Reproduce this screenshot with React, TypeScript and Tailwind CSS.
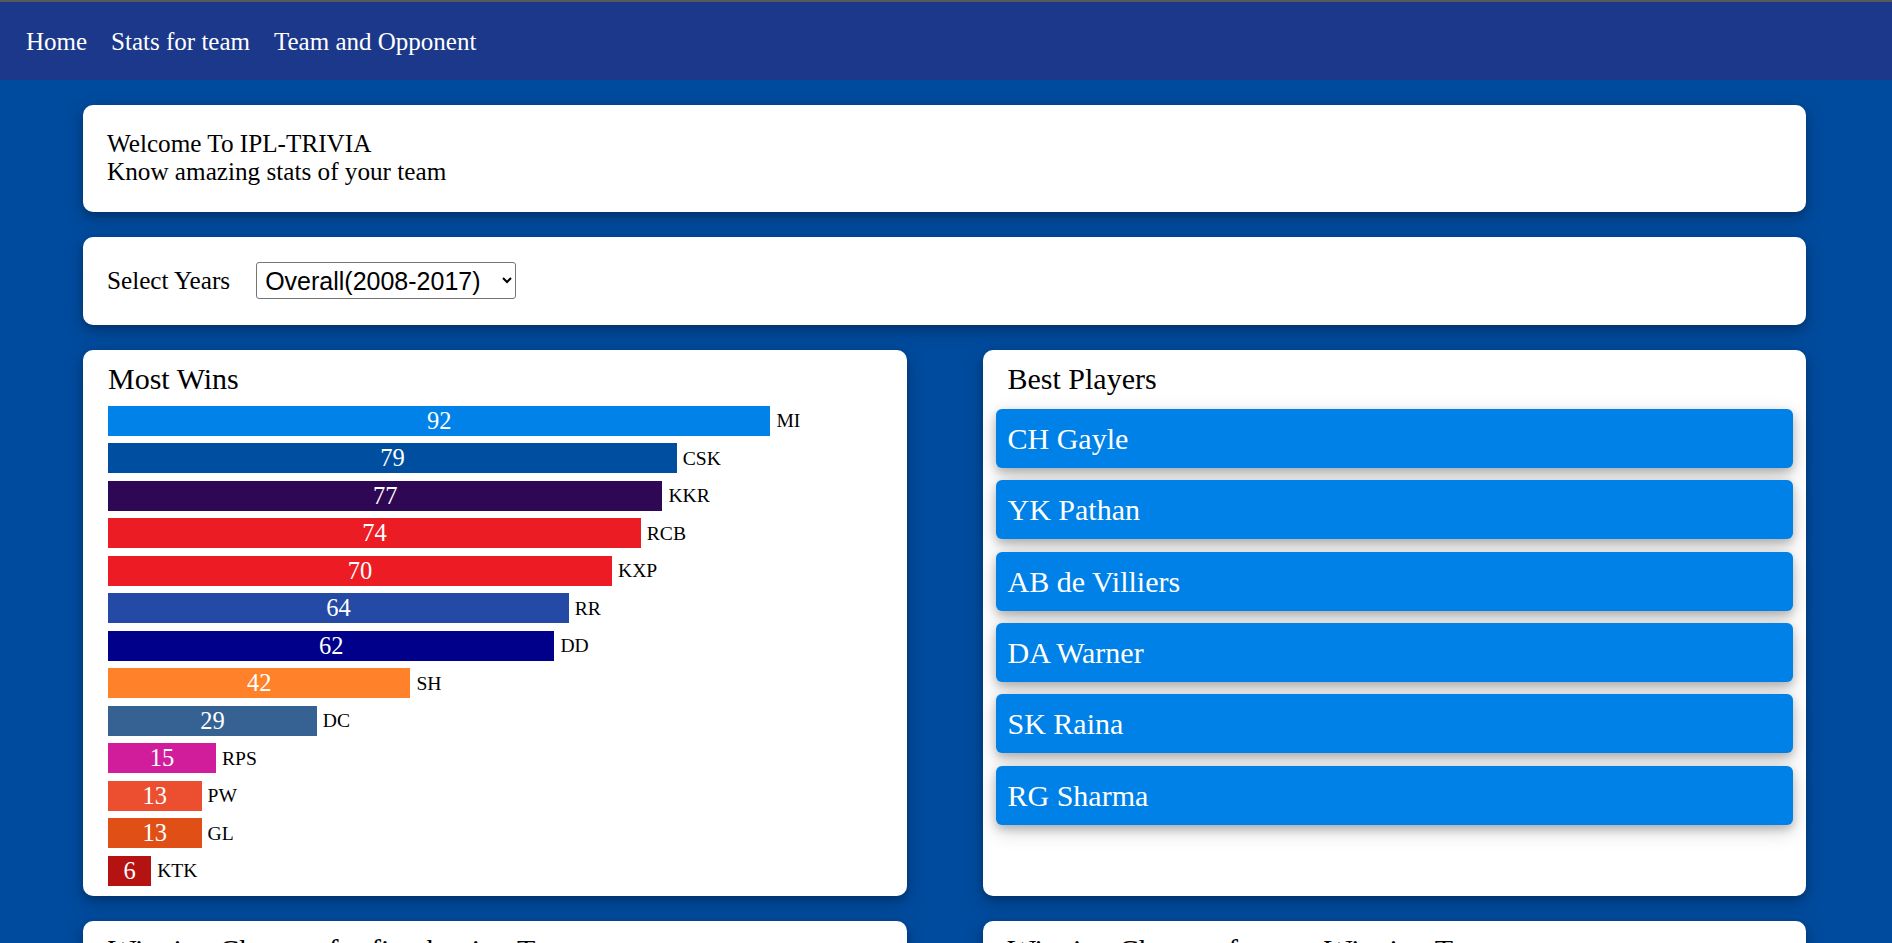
import React from "react";

const bars = [
  { v: 92, t: "MI", c: "bg-[#0082e8]" },
  { v: 79, t: "CSK", c: "bg-[#004ea0]" },
  { v: 77, t: "KKR", c: "bg-[#2e0854]" },
  { v: 74, t: "RCB", c: "bg-[#ec1c24]" },
  { v: 70, t: "KXP", c: "bg-[#ed1c24]" },
  { v: 64, t: "RR", c: "bg-[#254aa5]" },
  { v: 62, t: "DD", c: "bg-[#00008b]" },
  { v: 42, t: "SH", c: "bg-[#ff822a]" },
  { v: 29, t: "DC", c: "bg-[#366293]" },
  { v: 15, t: "RPS", c: "bg-[#d11d9b]" },
  { v: 13, t: "PW", c: "bg-[#ec4e30]" },
  { v: 13, t: "GL", c: "bg-[#e04f16]" },
  { v: 6, t: "KTK", c: "bg-[#b51212]" },
];

const players = ["CH Gayle", "YK Pathan", "AB de Villiers", "DA Warner", "SK Raina", "RG Sharma"];

const cardCls =
  "bg-white rounded-[10px] shadow-[0_4px_8px_0_rgba(0,0,0,0.2),0_6px_20px_0_rgba(0,0,0,0.19)]";

export default function App() {
  return (
    <div className="h-screen overflow-hidden bg-[#004b9e] font-['Liberation_Serif',serif] text-black">
      <nav className="h-[80px] border-t-[2px] border-[#58595b] bg-[#1b388a] flex items-center pl-[26px] gap-[24px] text-white text-[25px] leading-[29px]">
        <span>Home</span>
        <span>Stats for team</span>
        <span>Team and Opponent</span>
      </nav>

      <div className="ml-[83px] w-[1723px] pt-[25px] flex flex-col gap-[25px]">
        <div className={`${cardCls} pl-[24px] pr-[25px] pt-[25px] pb-[26px] text-[25.2px] leading-[28px]`}>
          <div>Welcome To IPL-TRIVIA</div>
          <div>Know amazing stats of your team</div>
        </div>

        <div className={`${cardCls} pl-[24px] pr-[25px] pt-[25px] pb-[25px] flex items-center text-[25.2px]`}>
          <span className="mr-[26px]">Select Years</span>
          <select
            defaultValue="overall"
            className="h-[37px] w-[260px] border border-[#767676] rounded-[3px] bg-white pl-[4px] font-['Liberation_Sans',Arial,sans-serif] text-[25px] text-black"
          >
            <option value="overall">Overall(2008-2017)</option>
          </select>
        </div>

        <div className="grid grid-cols-2 gap-x-[76px] gap-y-[25px]">
          <div className={`${cardCls} pt-[12px] pb-[10px] px-[25px]`}>
            <div className="text-[30px] leading-[33px]">Most Wins</div>
            <div className="mt-[11px] flex flex-col gap-[7.5px]">
              {bars.map((b) => (
                <div key={b.t} className="flex items-center h-[30px]">
                  <div
                    className={`${b.c} h-[30px] flex items-center justify-center text-white text-[24.5px] leading-none`}
                    style={{ width: `${b.v * 7.2}px` }}
                  >
                    {b.v}
                  </div>
                  <span className="ml-[6px] text-[19.6px] leading-none">{b.t}</span>
                </div>
              ))}
            </div>
          </div>

          <div className={`${cardCls} pt-[12px] px-[13px]`}>
            <div className="pl-[12px] text-[30px] leading-[33px]">Best Players</div>
            <div className="mt-[14px] flex flex-col gap-[12.4px]">
              {players.map((p) => (
                <div
                  key={p}
                  className="h-[59px] rounded-[6px] bg-[#0081e8] text-white text-[30px] flex items-center pl-[12px] shadow-[0_4px_8px_0_rgba(0,0,0,0.2),0_6px_20px_0_rgba(0,0,0,0.19)]"
                >
                  {p}
                </div>
              ))}
            </div>
          </div>

          <div className={`${cardCls} pt-[12px] px-[25px] h-[200px]`}>
            <div className="text-[30px] leading-[33px]">Winning Chances for first batting Team</div>
          </div>
          <div className={`${cardCls} pt-[12px] px-[25px] h-[200px]`}>
            <div className="text-[30px] leading-[33px]">Winning Chances for toss Winning Team</div>
          </div>
        </div>
      </div>
    </div>
  );
}
